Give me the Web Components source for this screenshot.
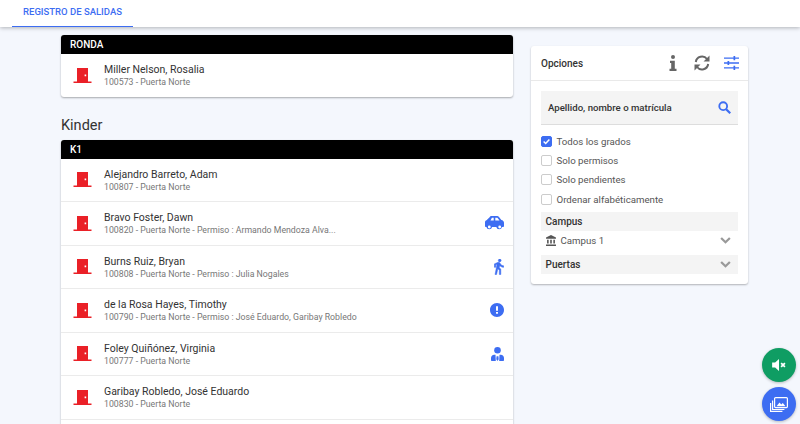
<!DOCTYPE html>
<html lang="es">
<head>
<meta charset="utf-8">
<title>Registro de salidas</title>
<style>
  html, body { height: 100%; }
  body {
    margin: 0;
    overflow: hidden;
    background: #f4f7fd;
    font-family: Roboto, "Liberation Sans", sans-serif;
    color: #333;
  }
</style>
</head>
<body>
<script>
/** Icons used by more than one element, all drawn in currentColor */
const ICONS = {
  door: `<svg viewBox="0 0 19 15" width="19" height="15"><path fill="currentColor" d="M4 0h11v13.4h3.5V15H.5v-1.6H4zM11.6 6.4v1.8h1.6V6.4z"/></svg>`,
  car: `<svg viewBox="0 0 19 14" width="19" height="14"><path fill="currentColor" fill-rule="evenodd" d="M4.6 1.2C5 .5 5.7 0 6.6 0h5.6c.7 0 1.3.3 1.8.9l2.4 3c1.4.2 2.600 1.300 2.600 2.800V10c0 .5-.4 1-1 1h-1a2.900 2.900 0 0 1-5.700 0H7.100a2.900 2.900 0 0 1-5.700 0H1c-.6 0-1-.5-1-1V6.200c0-.9.6-1.700 1.500-1.900zM6.900 1.700 5.500 4.400h3.200V1.700zM10.300 1.700v2.700h4.200L12.400 1.700zM4.300 9.600a1.400 1.400 0 1 0 0 2.800 1.400 1.400 0 0 0 0-2.800zM14.700 9.600a1.400 1.400 0 1 0 0 2.800 1.400 1.400 0 0 0 0-2.800z"/></svg>`,
  walk: `<svg viewBox="6 1.5 13 21.5" width="10" height="15.5"><path fill="currentColor" stroke="currentColor" stroke-width=".7" d="M13.500 5.500c1.100 0 2-.9 2-2s-.9-2-2-2-2 .9-2 2 .9 2 2 2zM9.800 8.900L7 23h2.100l1.800-8 2.100 2v6h2v-7.500l-2.100-2 .6-3C14.800 12 16.800 13 19 13v-2c-1.900 0-3.500-1-4.300-2.400l-1-1.600c-.4-.6-1-1-1.700-1-.3 0-.5.1-.8.1L6 8.300V13h2V9.600l1.800-.7"/></svg>`,
  alert: `<svg viewBox="2 2 20 20" width="14" height="14"><path fill="currentColor" d="M12 2C6.480 2 2 6.480 2 12s4.480 10 10 10 10-4.480 10-10S17.520 2 12 2zm1.400 15.400h-2.800v-2.600h2.800zm0-4.400h-2.800V6.600h2.800z"/></svg>`,
  person: `<svg viewBox="0 0 13 14" width="13" height="14"><circle cx="6.500" cy="3.300" r="3.300" fill="currentColor"/><path fill="currentColor" d="M3.200 7.800h1.300l.3 6.200H1c-.6 0-1-.4-1-1v-2c0-1.700 1.400-3.100 3.200-3.200zM8.500 7.800h1.300c1.800.1 3.200 1.500 3.200 3.200v2c0 .6-.4 1-1 1H8.200zM5.600 9.300h1.800l.3 3-1.200 1.700-1.200-1.700z"/></svg>`,
  chevron: `<svg viewBox="0 0 12 8" width="11" height="7"><path fill="none" stroke="currentColor" stroke-width="2.6" d="M1 1.200 6 6l5-4.800"/></svg>`,
  bank: `<svg viewBox="2 1 19 21" width="10" height="11"><path fill="currentColor" d="M11.500 1L2 6v2h19V6M16 10v7h3v-7M2 22h19v-3H2M10 10v7h3v-7M4 10v7h3v-7H4z"/></svg>`
};

/** Tab strip along the top of the page */
class TabBar extends HTMLElement {
  constructor() {
    super();
    this.attachShadow({ mode: "open" }).innerHTML = `
      <style>
        :host {
          display: flex;
          flex: none;
          height: 27px;
          padding-left: 12px;
          background: #fff;
          box-shadow: 0 1px 4px rgb(0 0 0 / .28);
          position: relative;
        }
        .tab {
          display: flex;
          align-items: center;
          justify-content: center;
          box-sizing: border-box;
          width: 121px;
          height: 27px;
          padding-bottom: 3px;
          border-bottom: 1px solid #3d6df2;
          color: #3d6df2;
          font-size: 9.5px;
          font-weight: 500;
        }
      </style>
      <div class="tab"><slot></slot></div>`;
  }
}

/** White card with a black title strip, holding exit rows */
class ExitGroup extends HTMLElement {
  constructor() {
    super();
    this.attachShadow({ mode: "open" }).innerHTML = `
      <style>
        :host {
          display: block;
          background: #fff;
          border-radius: 3px;
          box-shadow: 0 1px 2px rgb(0 0 0 / .32);
          overflow: hidden;
        }
        header {
          height: 19px;
          line-height: 19px;
          padding-left: 9px;
          background: #000;
          color: #fff;
          font-size: 10px;
          font-weight: 500;
        }
      </style>
      <header>${this.getAttribute("title")}</header>
      <slot></slot>`;
  }
}

/** One pupil: door icon, name, details and an optional icon on the right */
class ExitRow extends HTMLElement {
  constructor() {
    super();
    const icon = this.getAttribute("icon");
    this.attachShadow({ mode: "open" }).innerHTML = `
      <style>
        :host {
          display: flex;
          align-items: center;
          height: 42.5px;
          border-bottom: 1px solid #ebebeb;
          padding: 0 9.5px 0 11.5px;
        }
        :host(:last-child) { border-bottom: 0; height: 42px; padding-bottom: 1px; }
        .door { display: flex; color: #ea2027; }
        .text { flex: 1; margin-left: 12.5px; min-width: 0; padding-top: 1px; }
        .name { font-size: 10.5px; line-height: 13px; color: #333; }
        .sub { font-size: 8.75px; line-height: 12px; color: #777; }
        .icon { display: flex; color: #3d6df2; }
      </style>
      <span class="door">${ICONS.door}</span>
      <div class="text">
        <div class="name"><slot></slot></div>
        <div class="sub"><slot name="sub"></slot></div>
      </div>
      ${icon ? `<span class="icon">${ICONS[icon]}</span>` : ""}`;
  }
}

/** Checkbox row of the options panel */
class OptionCheck extends HTMLElement {
  constructor() {
    super();
    const on = this.hasAttribute("checked");
    this.attachShadow({ mode: "open" }).innerHTML = `
      <style>
        :host {
          display: flex;
          align-items: center;
          gap: 4.5px;
          height: 19.3px;
          font-size: 9.7px;
          color: #555;
        }
        .box {
          width: 11px;
          height: 11px;
          border: 1px solid #ccc;
          border-radius: 2px;
          box-sizing: border-box;
          display: flex;
        }
        .box.on { background: #3d6df2; border-color: #3d6df2; }
      </style>
      <span class="box ${on ? "on" : ""}">${on ? `<svg viewBox="0 0 11 11" width="9" height="9"><path fill="none" stroke="#fff" stroke-width="1.8" d="M2 5.500 4.500 8 9 3"/></svg>` : ""}</span>
      <slot></slot>`;
  }
}

/** Grey title strip with optional chevron, used for Campus and Puertas */
class OptionSection extends HTMLElement {
  constructor() {
    super();
    const chevron = this.hasAttribute("chevron");
    this.attachShadow({ mode: "open" }).innerHTML = `
      <style>
        :host {
          display: flex;
          align-items: center;
          justify-content: space-between;
          height: 19px;
          padding: 0 7px 0 4.5px;
          background: #f4f4f4;
          font-size: 10px;
          font-weight: 500;
          color: #333;
        }
        span { display: flex; color: #999; }
      </style>
      <slot></slot>${chevron ? `<span>${ICONS.chevron}</span>` : ""}`;
  }
}

/** Right hand panel with the filters */
class OptionsPanel extends HTMLElement {
  constructor() {
    super();
    this.attachShadow({ mode: "open" }).innerHTML = `
      <style>
        :host {
          display: block;
          width: 217px;
          flex: none;
          margin-top: 11px;
          background: #fff;
          border-radius: 3px;
          box-shadow: 0 1px 2px rgb(0 0 0 / .28);
          align-self: flex-start;
        }
        header {
          display: flex;
          align-items: center;
          height: 34px;
          padding: 0 9px 0 10px;
          border-bottom: 1px solid #e9e9e9;
          font-size: 10px;
          font-weight: 500;
          color: #333;
        }
        header b { flex: 1; font-weight: 500; }
        header svg { display: block; }
        .tools { display: flex; align-items: center; gap: 14px; }
        .tools .info { margin-right: 3px; }
        .body { padding: 10px; }
        .search {
          display: flex;
          align-items: center;
          justify-content: space-between;
          height: 33.5px;
          padding: 0 7px;
          margin-bottom: 7px;
          box-sizing: border-box;
          background: #f4f4f4;
          border-bottom: 1px solid #ddd;
          font-size: 9.65px;
          font-weight: 500;
          color: #333;
        }
        .search svg { display: block; }
        .campus {
          display: flex;
          align-items: center;
          box-sizing: border-box;
          height: 24px;
          padding: 0 7px 5px 5px;
          font-size: 9.7px;
          color: #555;
        }
        .campus span { display: flex; }
        .campus .label { flex: 1; margin-left: 4.5px; }
        .campus .chev { color: #999; }
        .checks { margin-bottom: 3px; }
      </style>
      <header>
        <b>Opciones</b>
        <div class="tools">
          <svg class="info" viewBox="0 0 8 16" width="8" height="16"><path fill="#666" d="M4 0a2 2 0 1 1 0 4 2 2 0 0 1 0-4zM1 5.800h4.800v8h1.700V16H.5v-2.200h1.700v-5.800H1z"/></svg>
          <svg viewBox="0 0 16 16" width="16" height="16"><g fill="none" stroke="#666" stroke-width="2"><path d="M1.800 7A6.300 6.300 0 0 1 13 4"/><path d="M14.200 9A6.300 6.300 0 0 1 3 12"/></g><path fill="#666" d="M15.500 .5v6h-6zM.5 15.500v-6h6z"/></svg>
          <svg viewBox="0 0 15 14" width="15" height="14"><path fill="#3d6df2" d="M0 1.400h15v1.400H0zM0 6.300h15v1.400H0zM0 11.200h15v1.400H0zM9.500 0h1.700v4.200H9.500zM3.500 4.900h1.700v4.200H3.500zM9.500 9.800h1.700V14H9.500z"/></svg>
        </div>
      </header>
      <div class="body">
        <div class="search">
          <span>Apellido, nombre o matrícula</span>
          <svg viewBox="0 0 14 14" width="13" height="13"><circle cx="5.600" cy="5.600" r="4.200" fill="none" stroke="#3d6df2" stroke-width="2"/><path stroke="#3d6df2" stroke-width="2.400" d="m8.800 8.800 4.400 4.400"/></svg>
        </div>
        <div class="checks"><slot name="checks"></slot></div>
        <option-section>Campus</option-section>
        <div class="campus"><span>${ICONS.bank}</span><span class="label">Campus 1</span><span class="chev">${ICONS.chevron}</span></div>
        <option-section chevron>Puertas</option-section>
      </div>`;
  }
}

/** Round floating button in the lower right corner */
class FabButton extends HTMLElement {
  constructor() {
    super();
    this.attachShadow({ mode: "open" }).innerHTML = `
      <style>
        :host {
          display: flex;
          align-items: center;
          justify-content: center;
          width: 34px;
          height: 34px;
          border-radius: 50%;
          color: #fff;
          background: var(--fab-color);
          box-shadow: 0 1px 3px rgb(0 0 0 / .25);
        }
        ::slotted(svg) { display: block; }
      </style>
      <slot></slot>`;
  }
}

/** Page shell: tab strip, list column, side panel and floating buttons */
class SalidasPage extends HTMLElement {
  constructor() {
    super();
    this.attachShadow({ mode: "open" }).innerHTML = `
      <style>
        :host {
          display: flex;
          flex-direction: column;
          height: 424px;
          overflow: hidden;
          position: relative;
        }
        .main { display: flex; gap: 18px; padding: 8px 0 0 61px; }
        .list { width: 452px; flex: none; }
        h2 {
          margin: 18px 0 2.5px;
          font-size: 14.5px;
          line-height: 22px;
          font-weight: 400;
          color: #333;
        }
        .fabs {
          position: absolute;
          right: 4px;
          bottom: 3px;
          display: flex;
          flex-direction: column;
          gap: 5px;
        }
      </style>
      <slot name="tabs"></slot>
      <div class="main">
        <div class="list"><slot name="ronda"></slot><h2>Kinder</h2><slot name="kinder"></slot></div>
        <slot name="options"></slot>
      </div>
      <div class="fabs"><slot name="fabs"></slot></div>`;
  }
}

customElements.define("tab-bar", TabBar);
customElements.define("exit-group", ExitGroup);
customElements.define("exit-row", ExitRow);
customElements.define("option-check", OptionCheck);
customElements.define("option-section", OptionSection);
customElements.define("options-panel", OptionsPanel);
customElements.define("fab-button", FabButton);
customElements.define("salidas-page", SalidasPage);

document.body.insertAdjacentHTML("beforeend", `
<salidas-page>
  <tab-bar slot="tabs">REGISTRO DE SALIDAS</tab-bar>
  <exit-group slot="ronda" title="RONDA">
    <exit-row>Miller Nelson, Rosalia<span slot="sub">100573 - Puerta Norte</span></exit-row>
  </exit-group>
  <exit-group slot="kinder" title="K1">
    <exit-row>Alejandro Barreto, Adam<span slot="sub">100807 - Puerta Norte</span></exit-row>
    <exit-row icon="car">Bravo Foster, Dawn<span slot="sub">100820 - Puerta Norte - Permiso : Armando Mendoza Alva...</span></exit-row>
    <exit-row icon="walk">Burns Ruiz, Bryan<span slot="sub">100808 - Puerta Norte - Permiso : Julia Nogales</span></exit-row>
    <exit-row icon="alert">de la Rosa Hayes, Timothy<span slot="sub">100790 - Puerta Norte - Permiso : José Eduardo, Garibay Robledo</span></exit-row>
    <exit-row icon="person">Foley Quiñónez, Virginia<span slot="sub">100777 - Puerta Norte</span></exit-row>
    <exit-row>Garibay Robledo, José Eduardo<span slot="sub">100830 - Puerta Norte</span></exit-row>
    <exit-row></exit-row>
  </exit-group>
  <options-panel slot="options">
    <option-check slot="checks" checked>Todos los grados</option-check>
    <option-check slot="checks">Solo permisos</option-check>
    <option-check slot="checks">Solo pendientes</option-check>
    <option-check slot="checks">Ordenar alfabéticamente</option-check>
  </options-panel>
  <fab-button slot="fabs" style="--fab-color:#0f9d63">
    <svg viewBox="0 0 16 14" width="14" height="12"><path fill="#fff" d="M0 4v6h3.500L8 14V0L3.500 4z"/><path stroke="#fff" stroke-width="2" d="m10.500 4.800 4.400 4.400m0-4.400-4.400 4.400"/></svg>
  </fab-button>
  <fab-button slot="fabs" style="--fab-color:#3d6df2">
    <svg viewBox="0 0 18 15" width="18" height="15"><g fill="none" stroke="#fff" stroke-width="1.200"><rect x="4.600" y=".6" width="12.800" height="10" rx="1"/><path d="M2.600 3.500v9h11.800M.6 6v8.400h11.800"/></g><path fill="#fff" d="m6.500 9.200 3-3.600 1.800 1.800 1.500-1.300 2.700 3.100z"/></svg>
  </fab-button>
</salidas-page>`);
</script>
</body>
</html>
